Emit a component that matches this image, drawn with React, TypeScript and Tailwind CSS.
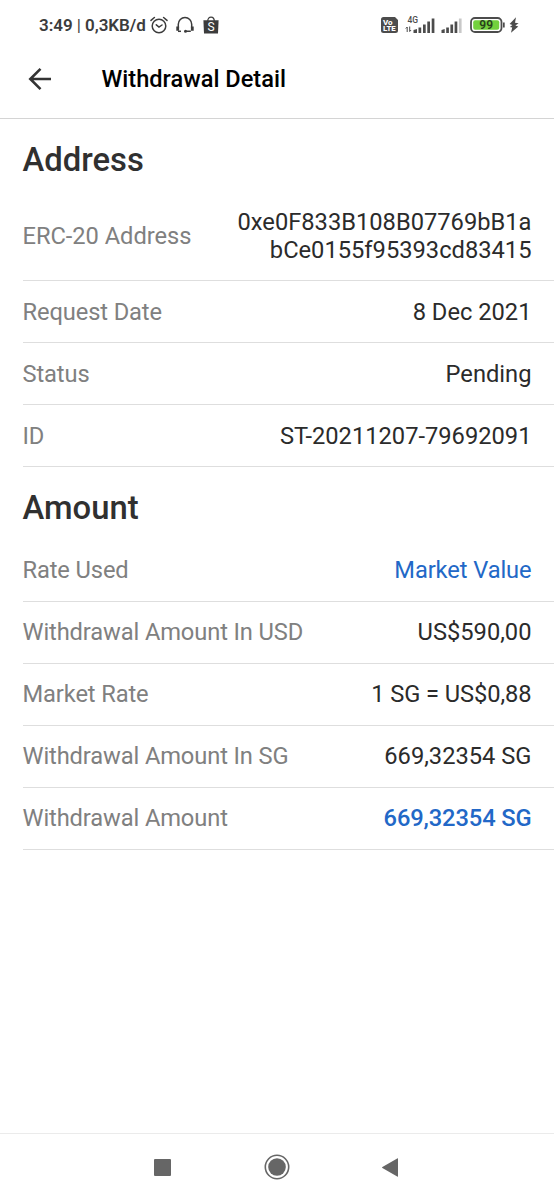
import type { ReactNode } from "react";

function StatusBar() {
  return (
    <div className="flex h-[50px] items-center justify-between pr-[35px] pl-[39px] text-[#3c3c3c]">
      <div className="flex items-center">
        <span className="w-[107px] text-[17px] leading-5 font-semibold tracking-[-0.05px] whitespace-nowrap">
          3:49 <span className="font-normal">|</span> 0,3KB/d
        </span>
        <svg className="ml-1 h-[18px] w-[18px]" viewBox="0 0 18 18" fill="none" stroke="currentColor" strokeWidth="1.5" strokeLinecap="round">
          <circle cx="9" cy="10" r="6.8" />
          <path d="M1 4.4 4.4 1.5M17 4.4l-3.4-2.9M6.3 8.8 9 11l3-2" />
        </svg>
        <svg className="ml-2 h-[18px] w-[18px]" viewBox="0 0 18 18" fill="none" stroke="currentColor" strokeWidth="1.5">
          <path d="M2.3 12V8.2a6.7 6.7 0 0 1 13.4 0V12M9.5 15.3h5.3" />
          <path d="M1.7 10.5v4.3M16.3 10.5v4.3" strokeWidth="2.8" />
          <path d="M2 15.3h3" />
          <circle cx="9.5" cy="15.3" r="1.5" fill="currentColor" stroke="none" />
        </svg>
        <svg className="ml-[9px] h-[18px] w-4" viewBox="0 0 16 18">
          <path d="M4.7 5.5C4.7-.4 11.3-.4 11.3 5.5" fill="none" stroke="currentColor" strokeWidth="1.3" />
          <path d="M.4 4.2h15.2l-.6 13.3H1z" fill="currentColor" />
          <text x="8" y="15.2" textAnchor="middle" fill="#fff" fontSize="12" fontFamily="Roboto">S</text>
        </svg>
      </div>
      <div className="flex items-center">
        <svg className="h-4 w-[17px]" viewBox="0 0 17 16">
          <path d="M2.5 0H14l3 3v10.5a2.5 2.5 0 0 1-2.5 2.5h-12A2.5 2.5 0 0 1 0 13.5v-11A2.5 2.5 0 0 1 2.5 0z" fill="#4c4c4c" />
          <text x="2" y="7.6" fill="#fff" fontSize="8" fontWeight="800" fontFamily="Roboto">Vo</text>
          <text x="2" y="14.3" fill="#fff" fontSize="7.8" fontWeight="800" fontFamily="Roboto">LTE</text>
        </svg>
        <svg className="ml-[7px] h-[18px] w-[30px]" viewBox="0 0 30 18" fill="#4c4c4c">
          <text x="2.5" y="7" fontSize="8.5" fontWeight="500" fontFamily="Roboto">4G</text>
          <path d="M2.2 16v-5L.8 12.5M4.7 10.5v5l1.4-1.5" fill="none" stroke="#4c4c4c" strokeWidth="1" />
          <path d="M8.5 14l3.5-1v4H8.5zM13.5 11.5h2.7V17h-2.7zM18 8.5h2.7V17H18zM22.3 5.5H25V17h-2.7zM26.7 2.5h2.7V17h-2.7z" />
        </svg>
        <svg className="ml-[6px] h-[18px] w-[22px]" viewBox="0 0 22 18" fill="#4c4c4c">
          <path d="M.5 14l3.2-1v4H.5zM5.2 11.5h2.7V17H5.2zM9.4 8.5h2.7V17H9.4zM13.6 5.5h2.7V17h-2.7z" />
          <path d="M17.9 2.5h2.7V17h-2.7z" fill="#c8c8c8" />
        </svg>
        <svg className="ml-[7px] h-4 w-9" viewBox="0 0 36 16">
          <rect x="1" y="1" width="30.5" height="14" rx="4" fill="#fff" stroke="#4c4c4c" strokeWidth="1.8" />
          <rect x="3.2" y="3.2" width="26" height="9.6" rx="2" fill="#73d13d" />
          <path d="M33 5.5h1.7v5H33z" fill="#4c4c4c" />
          <text x="16.2" y="12.2" textAnchor="middle" fill="#28401c" fontSize="12" fontWeight="600" fontFamily="Roboto">99</text>
        </svg>
        <svg className="ml-[3px] h-4 w-[10px]" viewBox="0 0 10 16" fill="#4c4c4c">
          <path d="M7 .2.6 7l2.8 1L.9 10l2.3.6L2 15.8l7.3-6.4-3-1 3.3-2.2L6 5.7z" />
        </svg>
      </div>
    </div>
  );
}

function Row({ label, children, className = "text-[#2b2b2b]" }: { label: string; children: ReactNode; className?: string }) {
  return (
    <div className="ml-[23px] flex h-[62px] items-center justify-between border-b border-[#dedede] pr-[22.5px] text-[23.7px] leading-7">
      <span className="-ml-[0.5px] tracking-[-0.12px] whitespace-nowrap text-[#808080]">{label}</span>
      <span className={`text-right whitespace-nowrap ${className}`}>{children}</span>
    </div>
  );
}

export default function App() {
  return (
    <div className="flex h-[1200px] w-[554px] flex-col bg-white font-[Roboto,sans-serif]">
      <StatusBar />
      <header className="flex h-[69px] items-center border-b border-[#d4d4d4] pb-[10px] pl-7">
        <svg className="h-6 w-6" viewBox="0 0 24 24" fill="none" stroke="#333" strokeWidth="2.6">
          <path d="M23 12H2.5M12.5 1.8 2.3 12l10.2 10.2" />
        </svg>
        <h1 className="ml-[49.5px] text-[23.6px] leading-9 font-medium text-black">Withdrawal Detail</h1>
      </header>

      <main className="flex-1">
        <h2 className="mt-[21px] ml-[22.5px] text-[32.8px] leading-10 font-medium text-[#303030]">Address</h2>
        <div className="mt-[11px] ml-[23px] flex h-[90px] items-center justify-between border-b border-[#dedede] pr-[22.5px] text-[23.7px] leading-7">
          <span className="-ml-[0.5px] tracking-[-0.05px] text-[#808080]">ERC-20 Address</span>
          <span className="text-right text-[#2b2b2b]">
            0xe0F833B108B07769bB1a
            <br />
            bCe0155f95393cd83415
          </span>
        </div>
        <Row label="Request Date">8 Dec 2021</Row>
        <Row label="Status">Pending</Row>
        <Row label="ID">ST-20211207-79692091</Row>

        <h2 className="mt-[21px] ml-[22.5px] text-[32.8px] leading-10 font-medium text-[#303030]">Amount</h2>
        <div className="mt-3 [&>div]:pb-0.5">
          <Row label="Rate Used" className="tracking-[-0.1px] text-[#2268c7]">Market Value</Row>
          <Row label="Withdrawal Amount In USD">US$590,00</Row>
          <Row label="Market Rate" className="tracking-[-0.08px] text-[#2b2b2b]">1 SG = US$0,88</Row>
          <Row label="Withdrawal Amount In SG">669,32354 SG</Row>
          <Row label="Withdrawal Amount" className="font-medium tracking-[-0.12px] text-[#2268c7]">669,32354 SG</Row>
        </div>
      </main>

      <nav className="flex h-[67px] items-center border-t border-[#ebebeb] pl-[153.5px]">
        <div className="h-[17px] w-[17px] rounded-[1px] bg-[#666]" />
        <svg className="ml-[93.5px] h-[26px] w-[26px]" viewBox="0 0 26 26">
          <circle cx="13" cy="13" r="11.7" fill="none" stroke="#666" strokeWidth="1.6" />
          <circle cx="13" cy="13" r="8.8" fill="#666" />
        </svg>
        <svg className="ml-[92px] h-[19px] w-4" viewBox="0 0 16 19" fill="#666">
          <path d="M16 .8v17.4a.5.5 0 0 1-.8.4L.4 10a.6.6 0 0 1 0-1L15.2.4a.5.5 0 0 1 .8.4z" />
        </svg>
      </nav>
    </div>
  );
}
